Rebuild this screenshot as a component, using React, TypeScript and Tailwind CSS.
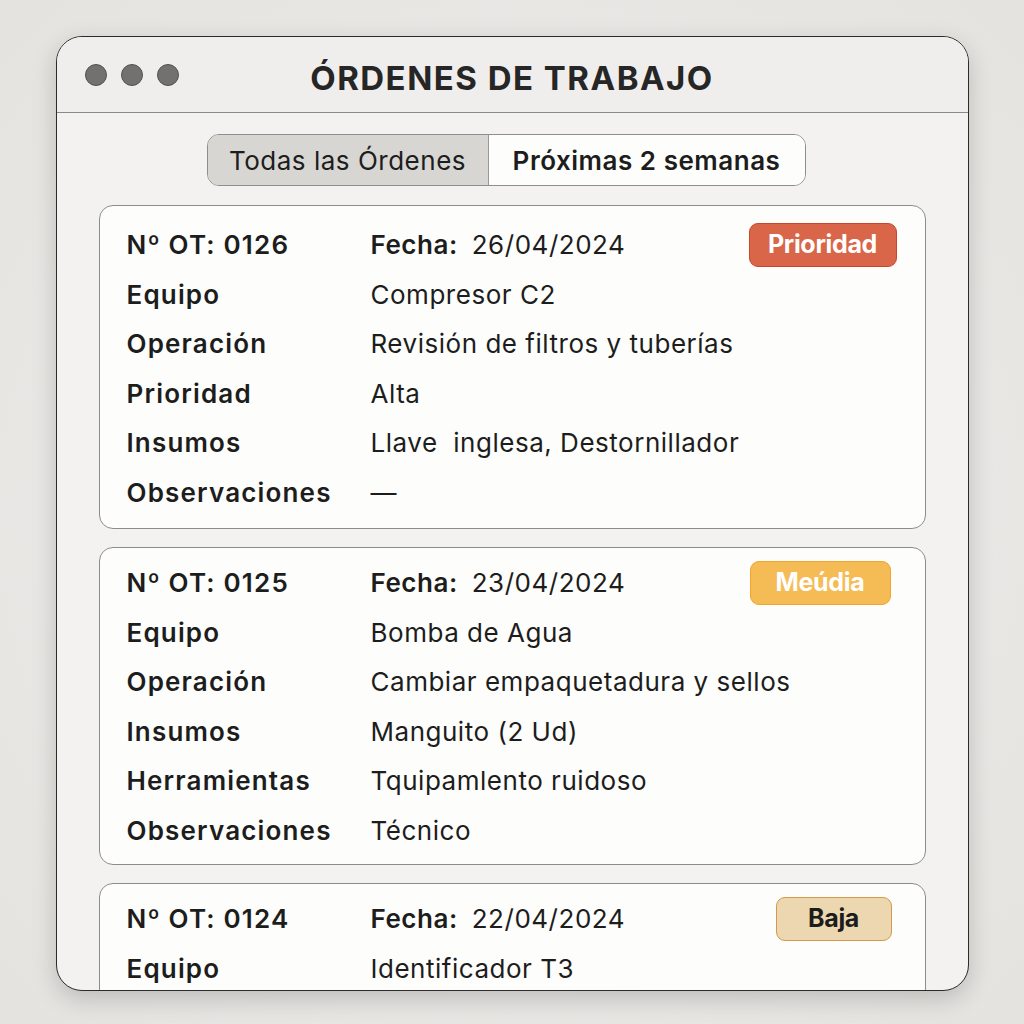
import type * as React from "react";

type Row = { label: string; value: string };

interface Order {
  id: string;
  date: string;
  badge: string;
  badgeClass: string;
  padClass: string;
  rows: Row[];
}

const ORDERS: Order[] = [
  {
    id: "0126",
    date: "26/04/2024",
    badge: "Prioridad",
    badgeClass: "w-[148px] bg-[#da6649] border-[#c8472c] text-white",
    padClass: "pt-[14px] pb-[11px]",
    rows: [
      { label: "Equipo", value: "Compresor C2" },
      { label: "Operación", value: "Revisión de filtros y tuberías" },
      { label: "Prioridad", value: "Alta" },
      { label: "Insumos", value: "Llave  inglesa, Destornillador" },
      { label: "Observaciones", value: "—" },
    ],
  },
  {
    id: "0125",
    date: "23/04/2024",
    badge: "Meúdia",
    badgeClass: "w-[141px] bg-[#f5bb55] border-[#f0a52c] text-white mr-[6px]",
    padClass: "pt-[10px] pb-[9px]",
    rows: [
      { label: "Equipo", value: "Bomba de Agua" },
      { label: "Operación", value: "Cambiar empaquetadura y sellos" },
      { label: "Insumos", value: "Manguito (2 Ud)" },
      { label: "Herramientas", value: "Tquipamlento ruidoso" },
      { label: "Observaciones", value: "Técnico" },
    ],
  },
  {
    id: "0124",
    date: "22/04/2024",
    badge: "Baja",
    badgeClass: "w-[116px] bg-[#ecd7b0] border-[#d49a4a] text-[#1c1c1c] mr-[5px]",
    padClass: "pt-[10px] pb-[9px]",
    // only the first row shows; the window cuts the card off
    rows: [{ label: "Equipo", value: "Identificador T3" }],
  },
];

const OrderCard: React.FC<{ order: Order }> = ({ order }) => (
  <section
    className={`shrink-0 rounded-[14px] border border-[#8d8c8a] bg-[#fdfdfc] pl-[27px] pr-[28px] ${order.padClass}`}
  >
    <div className="flex h-[49.5px] items-center">
      <span className="w-[244px] font-semibold tracking-[0.045em]">Nº OT: {order.id}</span>
      <span className="font-semibold">Fecha:</span>
      <span className="ml-[14px]">{order.date}</span>
      <span
        className={`ml-auto flex h-[44px] items-center justify-center rounded-[9px] border-[1.5px] text-[25px] font-bold tracking-[-0.3px] ${order.badgeClass}`}
      >
        {order.badge}
      </span>
    </div>
    {order.rows.map((r) => (
      <div key={r.label} className="flex h-[49.5px] items-center">
        <span className="w-[244px] font-semibold tracking-[0.045em]">{r.label}</span>
        <span className="whitespace-pre">{r.value}</span>
      </div>
    ))}
  </section>
);

export default function App() {
  return (
    <div
      className="flex min-h-screen w-full justify-center bg-[radial-gradient(ellipse_at_center,#efeeec_0%,#e4e3e0_100%)] pt-[36px]"
      style={{ fontFamily: "Inter, 'Noto Sans', sans-serif" }}
    >
      <div className="flex h-[955px] w-[913px] flex-col overflow-hidden rounded-[26px] border-[1.5px] border-[#2b2b2b] bg-[#f3f2f0] shadow-[0_8px_24px_rgba(0,0,0,0.18)]">
        <header className="grid h-[76px] shrink-0 grid-cols-[1fr_auto_1fr] items-center border-b-[1.5px] border-[#8a8987] bg-[#efeeec] px-[28px]">
          <div className="flex gap-[14px]">
            <span className="h-[22px] w-[22px] rounded-full border border-[#505050] bg-[#727170]" />
            <span className="h-[22px] w-[22px] rounded-full border border-[#505050] bg-[#727170]" />
            <span className="h-[22px] w-[22px] rounded-full border border-[#505050] bg-[#727170]" />
          </div>
          <h1 className="pt-[8px] text-[33px] font-bold tracking-[0.045em] text-[#262626]">
            ÓRDENES DE TRABAJO
          </h1>
          <div />
        </header>

        <div className="flex flex-col px-[42px] pt-[21px] text-[26px] tracking-[0.02em] text-[#1d1d1d]">
          <div className="mb-[19px] flex justify-center pr-[12px]">
            <div className="flex h-[52px] overflow-hidden rounded-[12px] border-[1.5px] border-[#8f8e8c]">
              <button className="w-[281px] border-r-[1.5px] border-[#9a9997] bg-[#d7d6d3] text-[26px] tracking-[0.02em] text-[#1d1d1d]">
                Todas las Órdenes
              </button>
              <button className="w-[316px] bg-[#fdfdfc] text-[26px] font-semibold tracking-[0.02em] text-[#1d1d1d]">
                Próximas 2 semanas
              </button>
            </div>
          </div>

          <div className="flex flex-col gap-[18px]">
            {ORDERS.map((o) => (
              <OrderCard key={o.id} order={o} />
            ))}
          </div>
        </div>
      </div>
    </div>
  );
}
